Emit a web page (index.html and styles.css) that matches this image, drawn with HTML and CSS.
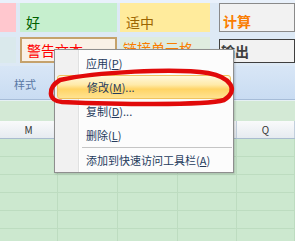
FILE: index.html
```html
<!DOCTYPE html>
<html lang="zh-CN">
<head>
    <meta charset="UTF-8">
    <meta name="viewport" content="width=device-width, initial-scale=1.0">
    <title>样式</title>
    <link rel="stylesheet" href="styles.css">
</head>
<body>
    <div class="ribbon">
        <div class="gallery">
            <div class="style-row">
                <div class="cell bad"></div>
                <div class="cell good">好</div>
                <div class="cell neutral">适中</div>
                <div class="cell calc">计算</div>
            </div>
            <div class="style-row second">
                <div class="cell blank"></div>
                <div class="cell warn">警告文本</div>
                <div class="cell linked">链接单元格</div>
                <div class="cell output">输出</div>
            </div>
        </div>
        <div class="group-label">样式</div>
    </div>
    <div class="formula-band"></div>
    <div class="col-headers">
        <div class="col-head w-m">M</div>
        <div class="col-head w-n"></div>
        <div class="col-head w-o"></div>
        <div class="col-head w-p"></div>
        <div class="col-head w-q">Q</div>
    </div>
    <div class="sheet">
        <div class="sheet-row"><div class="c w-m"></div><div class="c w-n"></div><div class="c w-o"></div><div class="c w-p"></div><div class="c w-q"></div></div>
        <div class="sheet-row"><div class="c w-m"></div><div class="c w-n"></div><div class="c w-o"></div><div class="c w-p"></div><div class="c w-q"></div></div>
        <div class="sheet-row"><div class="c w-m"></div><div class="c w-n"></div><div class="c w-o"></div><div class="c w-p"></div><div class="c w-q"></div></div>
        <div class="sheet-row"><div class="c w-m"></div><div class="c w-n"></div><div class="c w-o"></div><div class="c w-p"></div><div class="c w-q"></div></div>
        <div class="sheet-row"><div class="c w-m"></div><div class="c w-n"></div><div class="c w-o"></div><div class="c w-p"></div><div class="c w-q"></div></div>
        <div class="sheet-row"><div class="c w-m"></div><div class="c w-n"></div><div class="c w-o"></div><div class="c w-p"></div><div class="c w-q"></div></div>
    </div>

    <div class="context-menu">
        <div class="menu-item">应用(<u>P</u>)</div>
        <div class="menu-item active">修改(<u>M</u>)...</div>
        <div class="menu-item">复制(<u>D</u>)...</div>
        <div class="menu-item">删除(<u>L</u>)</div>
        <div class="menu-sep"></div>
        <div class="menu-item last">添加到快速访问工具栏(<u>A</u>)</div>
    </div>

    <svg class="mark" width="295" height="241" viewBox="0 0 295 241">
        <path d="M60 80 C95 72 175 68 208 73 C230 77 240 90 224 100 C205 106 110 104 62 102 C48 101 47 88 60 80 Z"
              fill="none" stroke="#e10a0a" stroke-width="4.5" stroke-linejoin="round"/>
    </svg>
</body>
</html>
```

FILE: styles.css
```css
body {
    margin: 0;
    width: 295px;
    height: 241px;
    overflow: hidden;
    position: relative;
    font-family: "Noto Sans CJK SC", sans-serif;
    background-color: #cce8cf;
}
.ribbon {
    background: linear-gradient(#e9f1fb 0, #e9f1fb 3px, #dde9f5 3px);
}
.gallery {
    height: 66px;
    padding-top: 3px;
    box-sizing: border-box;
}
.style-row {
    display: flex;
    height: 29px;
}
.style-row.second {
    height: 26px;
    margin-top: 5px;
}
.cell {
    box-sizing: border-box;
    font-size: 14px;
    line-height: 16px;
    white-space: nowrap;
    overflow: hidden;
    display: flex;
    align-items: flex-end;
    padding: 0 0 2px 6px;
}
.second .cell {
    align-items: flex-start;
    padding-top: 3px;
}
.bad, .blank {
    width: 16px;
}
.bad {
    background-color: #ffc7ce;
}
.blank {
    background-color: #dae9ec;
}
.good, .warn {
    width: 97px;
    margin-left: 4px;
}
.neutral, .linked {
    width: 90px;
    margin-left: 3px;
}
.calc, .output {
    width: 76px;
    margin-left: 9px;
}
.good {
    background-color: #c6efce;
    color: #006100;
}
.neutral {
    background-color: #ffeb9c;
    color: #9c6500;
}
.calc {
    background-color: #f2f2f2;
    border: 1px solid #8a8a8a;
    color: #fa7d00;
    font-weight: bold;
    padding-left: 3px;
}
.warn {
    background-color: #f9f1e7;
    border: 2px solid #c5a26c;
    color: #ff0000;
    padding-left: 5px;
    padding-top: 1px;
}
.linked {
    background-color: #dfecdf;
    color: #fa7d00;
    padding-left: 3px;
}
.output {
    background-color: #f2f2f2;
    border: 1px solid #3f3f3f;
    color: #3f3f3f;
    font-weight: bold;
    padding-left: 1px;
    margin-top: 2px;
}
.group-label {
    height: 34px;
    border-bottom: 1px solid #a6bcd8;
    background: linear-gradient(#d8e6f6, #c9dcf2);
    display: flex;
    align-items: center;
    padding: 3px 0 0 14px;
    box-sizing: border-box;
    font-size: 11px;
    color: #5a78a4;
}
.formula-band {
    height: 21px;
    background: linear-gradient(#e6f0f4 0, #e6f0f4 1px, #d3e9d5 1px);
}
.col-headers {
    display: flex;
    height: 18px;
    border-bottom: 1px solid #a9bccf;
    box-sizing: border-box;
    background: linear-gradient(#f9fafb, #e6ebf0);
}
.col-head {
    box-sizing: border-box;
    border-right: 1px solid #c2cfdc;
    font-size: 10px;
    line-height: 17px;
    text-align: center;
    color: #333;
}
.w-m { width: 58px; }
.w-n { width: 60px; }
.w-o { width: 60px; }
.w-p { width: 59px; }
.w-q { width: 58px; }
.sheet-row {
    display: flex;
    height: 18px;
    border-bottom: 1px solid #bddcc0;
    box-sizing: border-box;
}
.c {
    box-sizing: border-box;
    border-right: 1px solid #bddcc0;
}

/* right-click menu over the sheet */
.context-menu {
    position: absolute;
    left: 54px;
    top: 49px;
    width: 180px;
    box-sizing: border-box;
    padding: 1px 1px;
    border: 1px solid #8e8e8e;
    background: linear-gradient(to right, #f1f1f1 0, #f1f1f1 23px, #e0e1e1 23px, #e0e1e1 24px, #ffffff 24px, #ffffff 25px, #fcfcfc 25px);
    box-shadow: 1px 1px 2px rgba(0, 0, 0, 0.2);
}
.menu-item {
    height: 24px;
    display: flex;
    align-items: center;
    padding-left: 30px;
    font-size: 11px;
    color: #253b5c;
    white-space: nowrap;
}
.menu-item.active {
    box-sizing: border-box;
    margin: 0 1px;
    padding-left: 29px;
    border: 1px solid #f0c35e;
    border-radius: 3px;
    background: linear-gradient(#fff8dc 0%, #ffeaa8 40%, #ffd466 60%, #ffe391 100%);
}
.menu-item.last {
    height: 22px;
}
.menu-sep {
    height: 1px;
    margin: 0 0 1px 26px;
    background-color: #c5c5c5;
}
.mark {
    position: absolute;
    left: 0;
    top: 0;
    pointer-events: none;
}
```
